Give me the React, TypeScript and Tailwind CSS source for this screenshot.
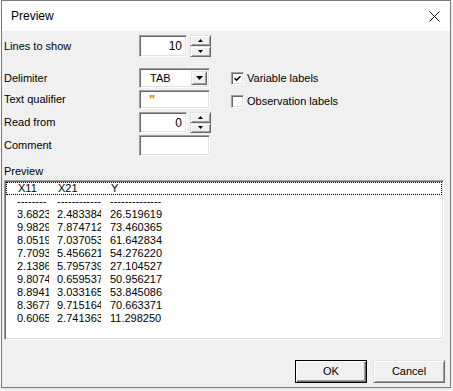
import type { ReactNode } from 'react'

const font = "font-['Liberation_Sans',Arial,sans-serif]"

// classic win32 3d edges
const sunken =
    'border border-t-[#a0a0a0] border-l-[#a0a0a0] border-r-white border-b-white shadow-[inset_1px_1px_0_#696969,inset_-1px_-1px_0_#e3e3e3]'
const raised =
    'border border-t-[#e3e3e3] border-l-[#e3e3e3] border-r-[#696969] border-b-[#696969] bg-[#f0f0f0] shadow-[inset_1px_1px_0_#ffffff,inset_-1px_-1px_0_#a0a0a0]'

const rows = [
    ['3.68237', '2.4833841', '26.519619'],
    ['9.98291', '7.8747125', '73.460365'],
    ['8.05192', '7.0370533', '61.642834'],
    ['7.70931', '5.4566217', '54.276220'],
    ['2.13866', '5.7957391', '27.104527'],
    ['9.80744', '0.6595372', '50.956217'],
    ['8.89413', '3.0331658', '53.845086'],
    ['8.36771', '9.7151644', '70.663371'],
    ['0.60659', '2.7413633', '11.298250'],
]

function Arrow({ up }: { up?: boolean }) {
    return (
        <svg width="5" height="3" viewBox="0 0 5 3">
            <path d={up ? 'M2.5 0L5 3H0z' : 'M0 0H5L2.5 3z'} fill="#000" />
        </svg>
    )
}

function Spinner() {
    return (
        <div className="ml-[3px] flex h-full w-[21px] flex-col">
            <div className={`${raised} flex flex-1 items-center justify-center`}>
                <Arrow up />
            </div>
            <div className={`${raised} flex flex-1 items-center justify-center`}>
                <Arrow />
            </div>
        </div>
    )
}

function Checkbox({ checked, label }: { checked?: boolean; label: string }) {
    return (
        <div className="flex items-center">
            <div className={`${sunken} flex h-[13px] w-[13px] items-center justify-center bg-white`}>
                {checked && (
                    <svg width="7" height="7" viewBox="0 0 7 7">
                        <path d="M0.5 3.2L2.5 5.2L6.5 1.2" stroke="#000" strokeWidth="1.6" fill="none" />
                    </svg>
                )}
            </div>
            <span className="ml-[3px] text-[11px] text-black">{label}</span>
        </div>
    )
}

function FormRow({
    label,
    className,
    children,
}: {
    label: string
    className: string
    children: ReactNode
}) {
    return (
        <div className={`flex items-center ${className}`}>
            <div className="w-[135px] text-[11px] text-black">{label}</div>
            {children}
        </div>
    )
}

function Cell({ w, children }: { w: string; children: string }) {
    return <div className={`${w} shrink-0 overflow-hidden whitespace-nowrap`}>{children}</div>
}

function Line({ cells }: { cells: string[] }) {
    return (
        <div className="flex h-[13px] items-center pl-[11px]">
            <Cell w="w-[32px]">{cells[0]}</Cell>
            <div className="w-[8px] shrink-0" />
            <Cell w="w-[44px]">{cells[1]}</Cell>
            <div className="w-[9px] shrink-0" />
            <Cell w="w-[80px]">{cells[2]}</Cell>
        </div>
    )
}

export default function App() {
    return (
        <div className={`h-[391px] w-[453px] bg-white ${font}`}>
            <div className="ml-[1px] flex h-[388px] w-[450px] flex-col border border-[#7a7a7a] shadow-[1px_2px_3px_rgba(0,0,0,0.12)]">
                {/* Title bar */}
                <div className="flex h-[30px] items-center justify-between bg-white pl-[9px] pr-[8px]">
                    <span className="text-[12px] text-black">Preview</span>
                    <svg width="11" height="11" viewBox="0 0 11 11" className="mr-[2px]">
                        <path d="M0.5 0.5L10.5 10.5M10.5 0.5L0.5 10.5" stroke="#111" strokeWidth="1" />
                    </svg>
                </div>

                {/* Body */}
                <div className="flex flex-1 flex-col bg-[#f0f0f0] pl-[2px] pr-[5px]">
                    <FormRow label="Lines to show" className="mt-[4px] h-[22px]">
                        <div className={`${sunken} flex h-full w-[48px] items-center justify-end bg-white pr-[4px] text-[12px] text-black`}>
                            10
                        </div>
                        <Spinner />
                    </FormRow>

                    <FormRow label="Delimiter" className="mt-[11px] h-[20px]">
                        <div className={`${sunken} flex h-full w-[71px] items-center bg-white p-[2px]`}>
                            <span className="flex-1 pl-[8px] text-[11px] text-black">TAB</span>
                            <div className={`${raised} flex h-full w-[16px] items-center justify-center`}>
                                <svg width="7" height="4" viewBox="0 0 7 4">
                                    <path d="M0 0H7L3.5 4z" fill="#000" />
                                </svg>
                            </div>
                        </div>
                        <div className="ml-[21px]">
                            <Checkbox checked label="Variable labels" />
                        </div>
                    </FormRow>

                    <FormRow label="Text qualifier" className="mt-[2px] h-[19px]">
                        <div className={`${sunken} h-full w-[71px] bg-white pl-[9px] pt-[2px] text-[13px] font-bold leading-[13px] text-[#e07800]`}>
                            "
                        </div>
                        <div className="ml-[21px] mt-[3px]">
                            <Checkbox label="Observation labels" />
                        </div>
                    </FormRow>

                    <FormRow label="Read from" className="mt-[3px] h-[21px]">
                        <div className={`${sunken} flex h-full w-[48px] items-center justify-end bg-white pr-[4px] text-[12px] text-black`}>
                            0
                        </div>
                        <Spinner />
                    </FormRow>

                    <FormRow label="Comment" className="mt-[2px] h-[21px]">
                        <div className={`${sunken} h-full w-[71px] bg-white`} />
                    </FormRow>

                    {/* Preview list */}
                    <div className="mt-[8px] flex h-[14px] items-center text-[11px] text-black">Preview</div>
                    <div className={`${sunken} mt-[2px] h-[160px] w-[440px] bg-white px-[1px] pt-[1px] text-[11px] text-black`}>
                        <div className="border border-dotted border-black">
                            <div className="-mt-px -mb-px">
                                <Line cells={['X11', 'X21', 'Y']} />
                            </div>
                        </div>
                        <Line cells={['--------', '------------', '--------------']} />
                        {rows.map((r, i) => (
                            <Line key={i} cells={r} />
                        ))}
                    </div>

                    {/* Buttons */}
                    <div className="mt-[20px] flex justify-end gap-[6px]">
                        <button className="h-[23px] w-[72px] border border-black bg-[#f0f0f0] text-[11px] text-black shadow-[inset_1px_1px_0_#ffffff,inset_-1px_-1px_0_#696969,inset_-2px_-2px_0_#a0a0a0]">
                            OK
                        </button>
                        <button className={`${raised} h-[23px] w-[72px] text-[11px] text-black`}>Cancel</button>
                    </div>
                </div>
            </div>
        </div>
    )
}
